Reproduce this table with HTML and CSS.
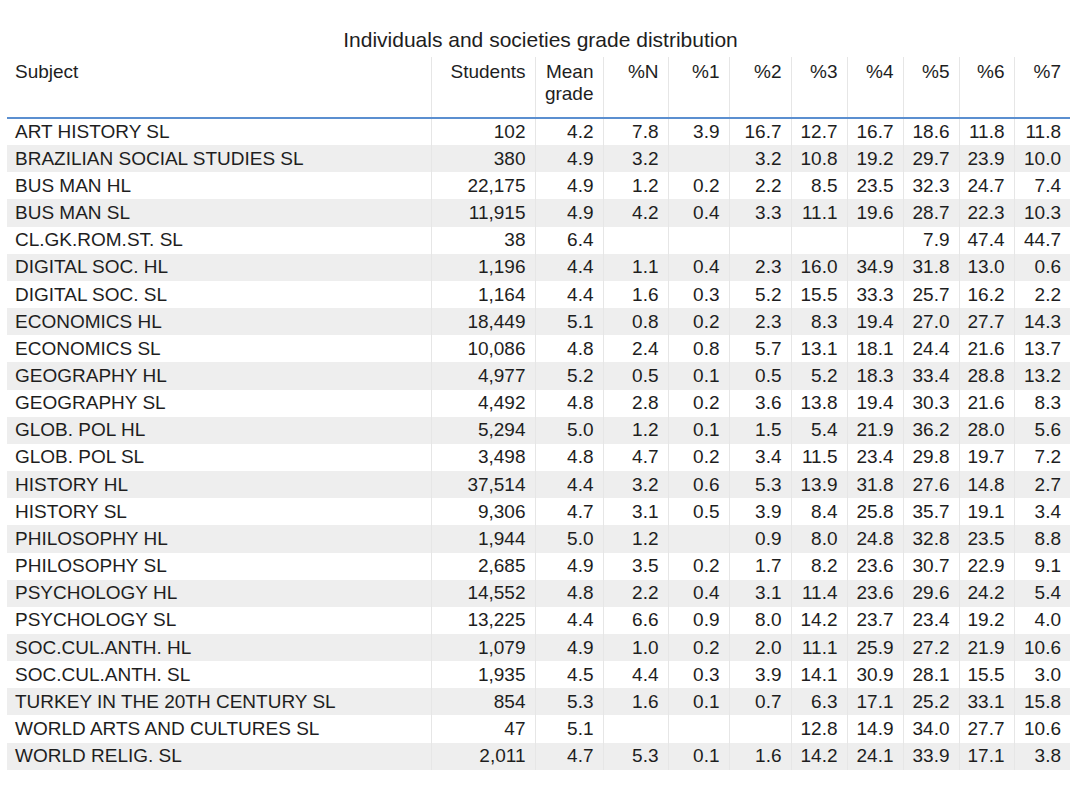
FILE: index.html
```html
<!DOCTYPE html>
<html>
<head>
<meta charset="utf-8">
<link rel="stylesheet" href="styles.css">
</head>
<body>
<div class="wrap">
<div class="title">Individuals and societies grade distribution</div>
<table class="grid">
<colgroup>
<col class="c-subj"><col class="c-stu"><col class="c-mean"><col class="c-pn"><col class="c-p1"><col class="c-p2"><col class="c-p3"><col class="c-p4"><col class="c-p5"><col class="c-p6"><col class="c-p7">
</colgroup>
<thead>
<tr><th class="left">Subject</th><th>Students</th><th>Mean<br>grade</th><th>%N</th><th>%1</th><th>%2</th><th>%3</th><th>%4</th><th>%5</th><th>%6</th><th>%7</th></tr>
</thead>
<tbody>
<tr><td class="left">ART HISTORY SL</td><td>102</td><td>4.2</td><td>7.8</td><td>3.9</td><td>16.7</td><td>12.7</td><td>16.7</td><td>18.6</td><td>11.8</td><td>11.8</td></tr>
<tr><td class="left">BRAZILIAN SOCIAL STUDIES SL</td><td>380</td><td>4.9</td><td>3.2</td><td></td><td>3.2</td><td>10.8</td><td>19.2</td><td>29.7</td><td>23.9</td><td>10.0</td></tr>
<tr><td class="left">BUS MAN HL</td><td>22,175</td><td>4.9</td><td>1.2</td><td>0.2</td><td>2.2</td><td>8.5</td><td>23.5</td><td>32.3</td><td>24.7</td><td>7.4</td></tr>
<tr><td class="left">BUS MAN SL</td><td>11,915</td><td>4.9</td><td>4.2</td><td>0.4</td><td>3.3</td><td>11.1</td><td>19.6</td><td>28.7</td><td>22.3</td><td>10.3</td></tr>
<tr><td class="left">CL.GK.ROM.ST. SL</td><td>38</td><td>6.4</td><td></td><td></td><td></td><td></td><td></td><td>7.9</td><td>47.4</td><td>44.7</td></tr>
<tr><td class="left">DIGITAL SOC. HL</td><td>1,196</td><td>4.4</td><td>1.1</td><td>0.4</td><td>2.3</td><td>16.0</td><td>34.9</td><td>31.8</td><td>13.0</td><td>0.6</td></tr>
<tr><td class="left">DIGITAL SOC. SL</td><td>1,164</td><td>4.4</td><td>1.6</td><td>0.3</td><td>5.2</td><td>15.5</td><td>33.3</td><td>25.7</td><td>16.2</td><td>2.2</td></tr>
<tr><td class="left">ECONOMICS HL</td><td>18,449</td><td>5.1</td><td>0.8</td><td>0.2</td><td>2.3</td><td>8.3</td><td>19.4</td><td>27.0</td><td>27.7</td><td>14.3</td></tr>
<tr><td class="left">ECONOMICS SL</td><td>10,086</td><td>4.8</td><td>2.4</td><td>0.8</td><td>5.7</td><td>13.1</td><td>18.1</td><td>24.4</td><td>21.6</td><td>13.7</td></tr>
<tr><td class="left">GEOGRAPHY HL</td><td>4,977</td><td>5.2</td><td>0.5</td><td>0.1</td><td>0.5</td><td>5.2</td><td>18.3</td><td>33.4</td><td>28.8</td><td>13.2</td></tr>
<tr><td class="left">GEOGRAPHY SL</td><td>4,492</td><td>4.8</td><td>2.8</td><td>0.2</td><td>3.6</td><td>13.8</td><td>19.4</td><td>30.3</td><td>21.6</td><td>8.3</td></tr>
<tr><td class="left">GLOB. POL HL</td><td>5,294</td><td>5.0</td><td>1.2</td><td>0.1</td><td>1.5</td><td>5.4</td><td>21.9</td><td>36.2</td><td>28.0</td><td>5.6</td></tr>
<tr><td class="left">GLOB. POL SL</td><td>3,498</td><td>4.8</td><td>4.7</td><td>0.2</td><td>3.4</td><td>11.5</td><td>23.4</td><td>29.8</td><td>19.7</td><td>7.2</td></tr>
<tr><td class="left">HISTORY HL</td><td>37,514</td><td>4.4</td><td>3.2</td><td>0.6</td><td>5.3</td><td>13.9</td><td>31.8</td><td>27.6</td><td>14.8</td><td>2.7</td></tr>
<tr><td class="left">HISTORY SL</td><td>9,306</td><td>4.7</td><td>3.1</td><td>0.5</td><td>3.9</td><td>8.4</td><td>25.8</td><td>35.7</td><td>19.1</td><td>3.4</td></tr>
<tr><td class="left">PHILOSOPHY HL</td><td>1,944</td><td>5.0</td><td>1.2</td><td></td><td>0.9</td><td>8.0</td><td>24.8</td><td>32.8</td><td>23.5</td><td>8.8</td></tr>
<tr><td class="left">PHILOSOPHY SL</td><td>2,685</td><td>4.9</td><td>3.5</td><td>0.2</td><td>1.7</td><td>8.2</td><td>23.6</td><td>30.7</td><td>22.9</td><td>9.1</td></tr>
<tr><td class="left">PSYCHOLOGY HL</td><td>14,552</td><td>4.8</td><td>2.2</td><td>0.4</td><td>3.1</td><td>11.4</td><td>23.6</td><td>29.6</td><td>24.2</td><td>5.4</td></tr>
<tr><td class="left">PSYCHOLOGY SL</td><td>13,225</td><td>4.4</td><td>6.6</td><td>0.9</td><td>8.0</td><td>14.2</td><td>23.7</td><td>23.4</td><td>19.2</td><td>4.0</td></tr>
<tr><td class="left">SOC.CUL.ANTH. HL</td><td>1,079</td><td>4.9</td><td>1.0</td><td>0.2</td><td>2.0</td><td>11.1</td><td>25.9</td><td>27.2</td><td>21.9</td><td>10.6</td></tr>
<tr><td class="left">SOC.CUL.ANTH. SL</td><td>1,935</td><td>4.5</td><td>4.4</td><td>0.3</td><td>3.9</td><td>14.1</td><td>30.9</td><td>28.1</td><td>15.5</td><td>3.0</td></tr>
<tr><td class="left">TURKEY IN THE 20TH CENTURY SL</td><td>854</td><td>5.3</td><td>1.6</td><td>0.1</td><td>0.7</td><td>6.3</td><td>17.1</td><td>25.2</td><td>33.1</td><td>15.8</td></tr>
<tr><td class="left">WORLD ARTS AND CULTURES SL</td><td>47</td><td>5.1</td><td></td><td></td><td></td><td>12.8</td><td>14.9</td><td>34.0</td><td>27.7</td><td>10.6</td></tr>
<tr><td class="left">WORLD RELIG. SL</td><td>2,011</td><td>4.7</td><td>5.3</td><td>0.1</td><td>1.6</td><td>14.2</td><td>24.1</td><td>33.9</td><td>17.1</td><td>3.8</td></tr>
</tbody>
</table>
</div>
</body>
</html>
```
FILE: styles.css
```css
html, body {
  margin: 0;
  padding: 0;
  background: #ffffff;
}
body {
  font-family: "Liberation Sans", Arial, sans-serif;
  color: #1e1e1e;
}
.wrap {
  padding: 28px 10px 0 7px;
}
.title {
  text-align: center;
  font-size: 21px;
  line-height: 24px;
  height: 29px;
  padding-left: 4px;
}
.grid {
  border-collapse: collapse;
  table-layout: fixed;
  width: 1063px;
  font-size: 19px;
}
.c-subj { width: 424px; }
.c-stu { width: 104px; }
.c-mean { width: 68px; }
.c-pn { width: 65px; }
.c-p1 { width: 61px; }
.c-p2 { width: 62px; }
.c-p3 { width: 56px; }
.c-p4 { width: 56px; }
.c-p5 { width: 56px; }
.c-p6 { width: 55px; }
.c-p7 { width: 56px; }
.grid th {
  font-weight: normal;
  text-align: right;
  vertical-align: top;
  height: 61px;
  padding: 4px 9px 0 8px;
  line-height: 22px;
  border-left: 1px solid #e6e6e6;
  border-bottom: 2px solid #5b8fd0;
  box-sizing: border-box;
}
.grid td {
  text-align: right;
  height: 27.17px;
  padding: 0 9px 0 8px;
  line-height: 20px;
  border-left: 1px solid #e6e6e6;
  box-sizing: border-box;
  white-space: nowrap;
}
.grid th:first-child, .grid td:first-child {
  border-left: none;
}
.grid .left {
  text-align: left;
}
.grid tbody tr:nth-child(even) td {
  background: #eeeeee;
}
```
